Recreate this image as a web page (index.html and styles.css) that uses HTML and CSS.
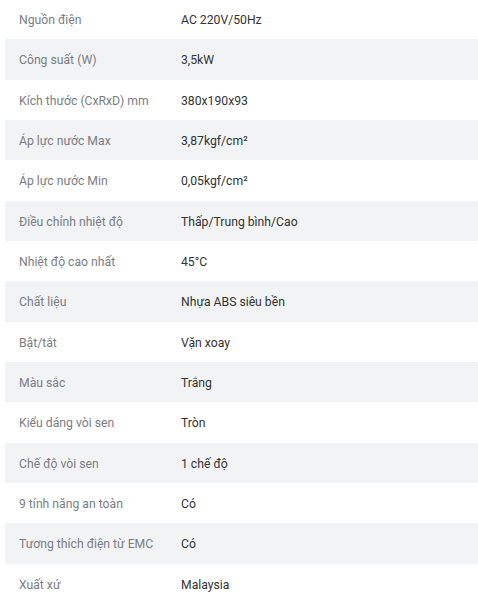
FILE: index.html
```html
<!DOCTYPE html>
<html lang="vi">
<head>
<meta charset="utf-8">
<link rel="stylesheet" href="styles.css">
</head>
<body>
<div class="specs">
  <div class="row"><div class="label">Nguồn điện</div><div class="value">AC 220V/50Hz</div></div>
  <div class="row alt"><div class="label">Công suất (W)</div><div class="value">3,5kW</div></div>
  <div class="row"><div class="label">Kích thước (CxRxD) mm</div><div class="value">380x190x93</div></div>
  <div class="row alt"><div class="label">Áp lực nước Max</div><div class="value">3,87kgf/cm²</div></div>
  <div class="row"><div class="label">Áp lực nước Min</div><div class="value">0,05kgf/cm²</div></div>
  <div class="row alt"><div class="label">Điều chỉnh nhiệt độ</div><div class="value">Thấp/Trung bình/Cao</div></div>
  <div class="row"><div class="label">Nhiệt độ cao nhất</div><div class="value">45°C</div></div>
  <div class="row alt"><div class="label">Chất liệu</div><div class="value">Nhựa ABS siêu bền</div></div>
  <div class="row"><div class="label">Bật/tắt</div><div class="value">Vặn xoay</div></div>
  <div class="row alt"><div class="label">Màu sắc</div><div class="value">Trắng</div></div>
  <div class="row"><div class="label">Kiểu dáng vòi sen</div><div class="value">Tròn</div></div>
  <div class="row alt"><div class="label">Chế độ vòi sen</div><div class="value">1 chế độ</div></div>
  <div class="row"><div class="label">9 tính năng an toàn</div><div class="value">Có</div></div>
  <div class="row alt"><div class="label">Tương thích điện từ EMC</div><div class="value">Có</div></div>
  <div class="row"><div class="label">Xuất xứ</div><div class="value">Malaysia</div></div>
</div>
</body>
</html>
```
FILE: styles.css
```css
html, body {
  margin: 0;
  padding: 0;
  background: #ffffff;
}
body {
  font-family: Roboto, "Noto Sans", Arial, sans-serif;
  font-size: 12.2px;
}
.specs {
  margin: -1px 0 0 5px;
  display: flex;
  flex-direction: column;
}
.row {
  box-sizing: border-box;
  display: flex;
  align-items: center;
  height: 40.33px;
  padding-top: 2px;
}
.row.alt {
  background: #f2f3f5;
}
.label {
  width: 162px;
  padding-left: 14px;
  color: #7a7e84;
}
.value {
  color: #333333;
}
```
